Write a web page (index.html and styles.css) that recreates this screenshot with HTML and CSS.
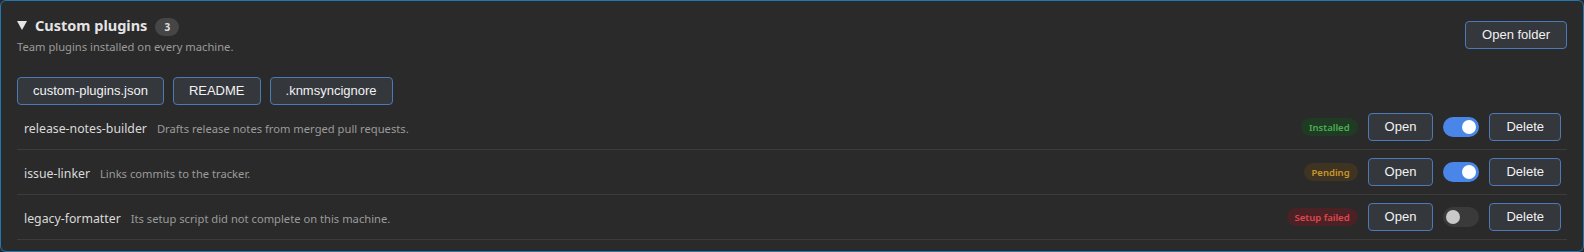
FILE: index.html
```html
<!DOCTYPE html>
<html>
<head>
<meta charset="utf-8">
<link rel="stylesheet" href="styles.css">
</head>
<body>
<section class="panel">
  <div class="header">
    <div class="header-text">
      <div class="title-line">
        <svg class="caret" width="10" height="9" viewBox="0 0 10 9"><polygon points="0,0 10,0 5,9" fill="#e6e6e6"/></svg>
        <span class="title">Custom plugins</span>
        <span class="count">3</span>
      </div>
      <div class="subtitle">Team plugins installed on every machine.</div>
    </div>
    <button class="btn">Open folder</button>
  </div>
  <div class="files">
    <button class="btn">custom-plugins.json</button>
    <button class="btn">README</button>
    <button class="btn">.knmsyncignore</button>
  </div>
  <div class="rows">
    <div class="row">
      <div class="info"><span class="name">release-notes-builder</span><span class="desc">Drafts release notes from merged pull requests.</span></div>
      <div class="actions">
        <span class="status ok">Installed</span>
        <button class="btn">Open</button>
        <span class="toggle on"><span class="knob"></span></span>
        <button class="btn">Delete</button>
      </div>
    </div>
    <div class="row">
      <div class="info"><span class="name">issue-linker</span><span class="desc">Links commits to the tracker.</span></div>
      <div class="actions">
        <span class="status pending">Pending</span>
        <button class="btn">Open</button>
        <span class="toggle on"><span class="knob"></span></span>
        <button class="btn">Delete</button>
      </div>
    </div>
    <div class="row">
      <div class="info"><span class="name">legacy-formatter</span><span class="desc">Its setup script did not complete on this machine.</span></div>
      <div class="actions">
        <span class="status failed">Setup failed</span>
        <button class="btn">Open</button>
        <span class="toggle"><span class="knob"></span></span>
        <button class="btn">Delete</button>
      </div>
    </div>
  </div>
</section>
</body>
</html>
```

FILE: styles.css
```css
* { box-sizing: border-box; }
html, body { margin: 0; padding: 0; background: #2a2a2a; }
body { font-family: "Noto Sans", "Open Sans", sans-serif; }

.panel {
  width: 1584px;
  height: 252px;
  border: 1px solid #2277b3;
  border-radius: 6px;
  background: #2a2a2a;
  padding: 14px 16px 13px 16px;
}

.header {
  display: flex;
  justify-content: space-between;
  align-items: center;
}

.title-line {
  display: flex;
  align-items: center;
  height: 20px;
}
.caret { margin-right: 8px; margin-top: 1px; }
.title {
  font-size: 14.5px;
  font-weight: 700;
  color: #e4e4e4;
  line-height: 20px;
}
.count {
  margin-left: 8px;
  margin-top: 3px;
  height: 18px;
  min-width: 24px;
  padding: 0 8px;
  border-radius: 9px;
  background: #464646;
  color: #e0e0e0;
  font-size: 10px;
  font-weight: 700;
  display: inline-flex;
  align-items: center;
  justify-content: center;
}
.subtitle {
  margin-top: 4px;
  font-size: 11.2px;
  line-height: 16px;
  color: #9b9b9b;
}

.btn {
  height: 28px;
  padding: 0 16px;
  border: 1px solid #4c79b8;
  border-radius: 4px;
  background: #34373c;
  color: #f2f2f2;
  font-family: "Liberation Sans", Arial, sans-serif;
  font-size: 13px;
  line-height: 26px;
}

.files {
  display: flex;
  gap: 9px;
  margin-top: 22px;
}
.files .btn { padding: 0 15px; }

.rows { display: flex; flex-direction: column; }
.row {
  height: 45px;
  border-bottom: 1px solid #3c3c3c;
  padding: 0 6px 0 7px;
  display: flex;
  align-items: center;
  justify-content: space-between;
}
.info { display: flex; align-items: baseline; gap: 10px; padding-top: 3px; }
.name { font-size: 12.3px; color: #dadada; }
.desc { font-size: 11.2px; color: #9b9b9b; }

.actions { display: flex; align-items: center; gap: 10px; }
.status {
  height: 18px;
  padding: 0 8px;
  border-radius: 9px;
  font-size: 9.5px;
  font-weight: 600;
  display: inline-flex;
  align-items: center;
}
.status.ok { background: #1f3b24; color: #4cad52; }
.status.pending { background: #3e3421; color: #c9962c; }
.status.failed { background: #4a2226; color: #e0474d; }

.toggle {
  width: 36px;
  height: 20px;
  border-radius: 10px;
  background: #3a3a3a;
  display: flex;
  align-items: center;
  padding: 0 3px;
}
.toggle .knob {
  width: 14px;
  height: 14px;
  border-radius: 50%;
  background: #c9c9c9;
}
.toggle.on { background: #4a86e8; justify-content: flex-end; }
.toggle.on .knob { background: #ffffff; }
```
